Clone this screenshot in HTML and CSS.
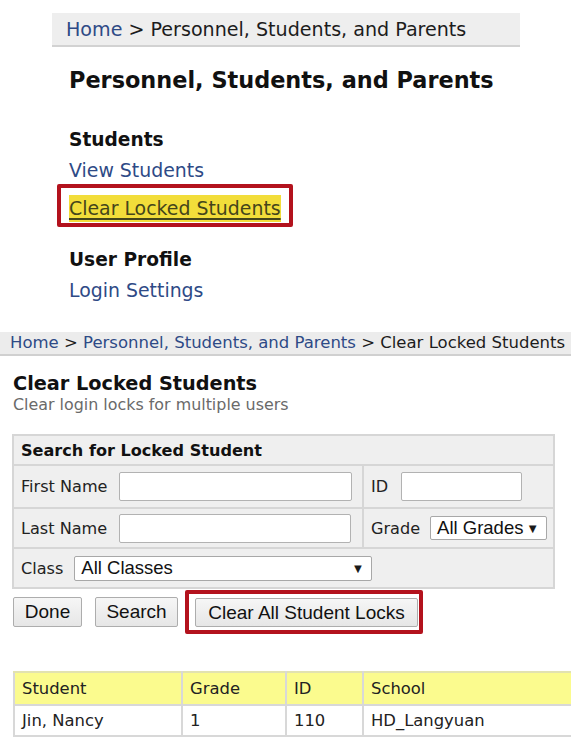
FILE: index.html
```html
<!DOCTYPE html>
<html>
<head>
<meta charset="utf-8">
<link rel="stylesheet" href="styles.css">
</head>
<body>
<div class="top">
  <div class="crumb crumb-top"><a class="link" href="#">Home</a> &gt; Personnel, Students, and Parents</div>
  <h1 class="page-title">Personnel, Students, and Parents</h1>
  <div class="menu">
    <div class="menu-head">Students</div>
    <div class="menu-item"><a class="link" href="#">View Students</a></div>
    <div class="callout callout-link"><a class="link hl" href="#">Clear Locked Students</a></div>
    <div class="menu-head menu-head-2">User Profile</div>
    <div class="menu-item"><a class="link" href="#">Login Settings</a></div>
  </div>
</div>

<div class="bottom">
  <div class="crumb crumb-bottom"><a class="link" href="#">Home</a> &gt; <a class="link" href="#">Personnel, Students, and Parents</a> &gt; Clear Locked Students</div>
  <h2 class="sub-title">Clear Locked Students</h2>
  <div class="sub-desc">Clear login locks for multiple users</div>

  <table class="search">
    <colgroup><col class="col-wide"><col class="col-narrow"></colgroup>
    <tr class="search-head"><th colspan="2">Search for Locked Student</th></tr>
    <tr class="row-1">
      <td><div class="field"><span class="lbl">First Name</span><span class="inp inp-name"></span></div></td>
      <td><div class="field field-id"><span class="lbl">ID</span><span class="inp inp-id"></span></div></td>
    </tr>
    <tr class="row-2">
      <td><div class="field"><span class="lbl">Last Name</span><span class="inp inp-name inp-last"></span></div></td>
      <td><div class="field field-grade"><span class="lbl">Grade</span><span class="sel sel-grade"><span>All Grades</span><span class="arrow">▼</span></span></div></td>
    </tr>
    <tr class="row-3">
      <td colspan="2"><div class="field field-class"><span class="lbl">Class</span><span class="sel sel-class"><span>All Classes</span><span class="arrow">▼</span></span></div></td>
    </tr>
  </table>

  <div class="actions">
    <button class="btn btn-done">Done</button>
    <button class="btn btn-search">Search</button>
    <div class="callout callout-btn"><button class="btn btn-clear">Clear All Student Locks</button></div>
  </div>

  <table class="results">
    <colgroup><col class="col-student"><col class="col-grade"><col class="col-id"><col class="col-school"></colgroup>
    <tr class="res-head"><td>Student</td><td>Grade</td><td>ID</td><td>School</td></tr>
    <tr class="res-row"><td>Jin, Nancy</td><td>1</td><td>110</td><td>HD_Langyuan</td></tr>
  </table>
</div>
</body>
</html>
```
FILE: styles.css
```css
* { box-sizing: border-box; }
html, body { margin: 0; padding: 0; background: #fff; }
body {
  font-family: "DejaVu Sans", Verdana, sans-serif;
  color: #1c1c1c;
  width: 578px;
  height: 741px;
  overflow: hidden;
}
.link { color: #2e4a86; text-decoration: none; }

/* ---------- top panel ---------- */
.top { margin-left: 52px; width: 468px; padding-top: 13px; }
.crumb-top {
  background: #eeeeee;
  border-bottom: 2px solid #d2d2d2;
  height: 34px;
  line-height: 33px;
  padding-left: 14px;
  font-size: 19.1px;
  white-space: nowrap;
}
.page-title {
  margin: 18px 0 0 17px;
  font-size: 22.4px;
  line-height: 30px;
  font-weight: bold;
  color: #111;
}
.menu { padding-left: 17px; }
.menu-head {
  margin-top: 30px;
  font-size: 18.6px;
  font-weight: bold;
  line-height: 30px;
  color: #111;
}
.menu-head-2 { margin-top: 18px; }
.menu-item { font-size: 18.9px; line-height: 30px; }

.callout { border: 4px solid #b3121d; border-radius: 2px; display: inline-block; }
.callout-link {
  margin-left: -12px;
  margin-top: -1px;
  padding: 7px 7px 1px 8px;
  font-size: 18.9px;
  line-height: 27px;
  display: block;
  width: 236px;
}
.hl {
  background: #f2dd3a;
  color: #44451a;
  text-decoration: underline;
  text-decoration-thickness: 2px;
  text-underline-offset: 3px;
  display: inline-block;
  height: 27px;
}

/* ---------- bottom panel ---------- */
.bottom { margin-top: 27px; }
.crumb-bottom {
  width: 571px;
  background: #ececec;
  border-bottom: 2px solid #d0d0d0;
  height: 24px;
  line-height: 22px;
  padding-left: 10px;
  font-size: 16.5px;
  white-space: nowrap;
}
.sub-title {
  margin: 17px 0 0 13px;
  font-size: 19.3px;
  line-height: 22px;
  font-weight: bold;
  color: #111;
}
.sub-desc {
  margin-left: 13px;
  font-size: 15.9px;
  line-height: 20px;
  color: #6a6a6a;
}

.search {
  margin: 19px 0 0 12px;
  width: 541px;
  border-collapse: collapse;
  background: #efefef;
  font-size: 16.1px;
  table-layout: fixed;
}
.col-wide { width: 350px; }
.col-narrow { width: 191px; }
.search th, .search td { border: 2px solid #d6d6d6; padding: 0 0 0 7px; }
.search-head th { text-align: left; font-weight: bold; height: 30px; color: #111; }
.row-1 td { height: 43px; }
.row-2 td { height: 40px; }
.row-3 td { height: 40px; }
.field { display: flex; align-items: center; gap: 12px; }
.field-id { gap: 13px; }
.field-grade { gap: 10px; }
.field-class { gap: 11px; }
.lbl { white-space: nowrap; color: #222; }
.inp {
  display: block;
  background: #fff;
  border: 1px solid #b2b2b2;
  border-radius: 2px;
  height: 29px;
}
.inp-name { width: 233px; }
.inp-last { width: 232px; }
.inp-id { width: 121px; }
.sel {
  display: flex;
  align-items: center;
  justify-content: space-between;
  background: #fff;
  border: 1px solid #a8a8a8;
  border-radius: 2px;
  font-family: "Liberation Sans", Arial, sans-serif;
  font-size: 18.5px;
  color: #111;
  padding: 0 7px 0 6px;
}
.sel-grade { width: 117px; height: 24px; }
.sel-class { width: 298px; height: 25px; }
.arrow { font-size: 13px; color: #1a1a1a; }

.actions { display: flex; align-items: center; margin: 1px 0 0 13px; }
.btn {
  font-family: "Liberation Sans", Arial, sans-serif;
  font-size: 19px;
  color: #111;
  background: linear-gradient(#f6f6f6, #e6e6e6);
  border: 1px solid #adadad;
  border-radius: 2px;
  height: 30px;
  padding: 0;
}
.btn-done { width: 69px; }
.btn-search { width: 83px; margin-left: 13px; }
.callout-btn { margin-left: 7px; padding: 4px 1px 3px 6px; }
.btn-clear { width: 223px; height: 29px; display: block; }

.results {
  margin: 37px 0 0 13px;
  width: 557px;
  border-collapse: collapse;
  table-layout: fixed;
  font-size: 16.4px;
}
.col-student { width: 168px; }
.col-grade { width: 104px; }
.col-id { width: 77px; }
.col-school { width: 208px; }
.results td { border: 2px solid #d8d8d8; padding: 0 0 0 7px; color: #222; }
.res-head td { background: #fbfb8e; height: 33px; border-top-color: #e2e2b0; }
.res-row td { height: 31px; }
.results td:last-child { border-right: none; }
```
